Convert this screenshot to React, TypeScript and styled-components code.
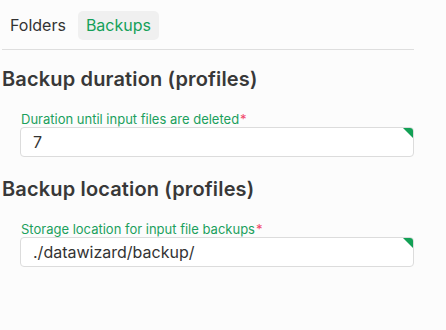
import styled, { createGlobalStyle } from "styled-components"

const GlobalStyle = createGlobalStyle`
  body {
    margin: 0;
    background: #fcfcfc;
    font-family: Inter, "Noto Sans", sans-serif;
  }
`

const Page = styled.div`
  padding: 11px 0 0 2px;
  width: 412px;
`

const TabBar = styled.div`
  display: flex;
  gap: 4px;
  padding-bottom: 9px;
  border-bottom: 1px solid #dedede;
`

const Tab = styled.div<{ $active?: boolean }>`
  padding: 6px 8px;
  font-size: 16px;
  line-height: 17px;
  border-radius: 5px;
  color: ${p => (p.$active ? "#15a05a" : "#333")};
  background: ${p => (p.$active ? "#f0f0f0" : "transparent")};
`

const Section = styled.section`
  padding-top: 17px;
  & + & {
    padding-top: 20px;
  }
`

const Heading = styled.h2`
  margin: 0;
  font-size: 20px;
  line-height: 24px;
  font-weight: 600;
  letter-spacing: 0.15px;
  color: #383838;
`

const Field = styled.div`
  margin: 20px 0 0 18px;
`

const Label = styled.label`
  display: block;
  font-size: 13px;
  line-height: 16px;
  color: #1ba05c;
  padding-left: 1px;
`

const Required = styled.span`
  color: #f0456a;
  margin-left: 1px;
`

const InputBox = styled.div`
  position: relative;
  box-sizing: border-box;
  height: 30px;
  border: 1px solid #dcdcdc;
  border-radius: 4px;
  background: #fff;
  padding: 0 12px;
  display: flex;
  align-items: center;
  font-size: 16px;
  color: #333;
  overflow: hidden;
  &::after {
    content: "";
    position: absolute;
    top: 0;
    right: 0;
    border-style: solid;
    border-width: 0 10px 10px 0;
    border-color: transparent #12a055 transparent transparent;
  }
`

const fields = [
  {
    title: "Backup duration (profiles)",
    label: "Duration until input files are deleted",
    value: "7",
  },
  {
    title: "Backup location (profiles)",
    label: "Storage location for input file backups",
    value: "./datawizard/backup/",
  },
]

export default function App() {
  return (
    <Page>
      <GlobalStyle />
      <TabBar>
        <Tab>Folders</Tab>
        <Tab $active>Backups</Tab>
      </TabBar>
      {fields.map(f => (
        <Section key={f.title}>
          <Heading>{f.title}</Heading>
          <Field>
            <Label>
              {f.label}
              <Required>*</Required>
            </Label>
            <InputBox>{f.value}</InputBox>
          </Field>
        </Section>
      ))}
    </Page>
  )
}
